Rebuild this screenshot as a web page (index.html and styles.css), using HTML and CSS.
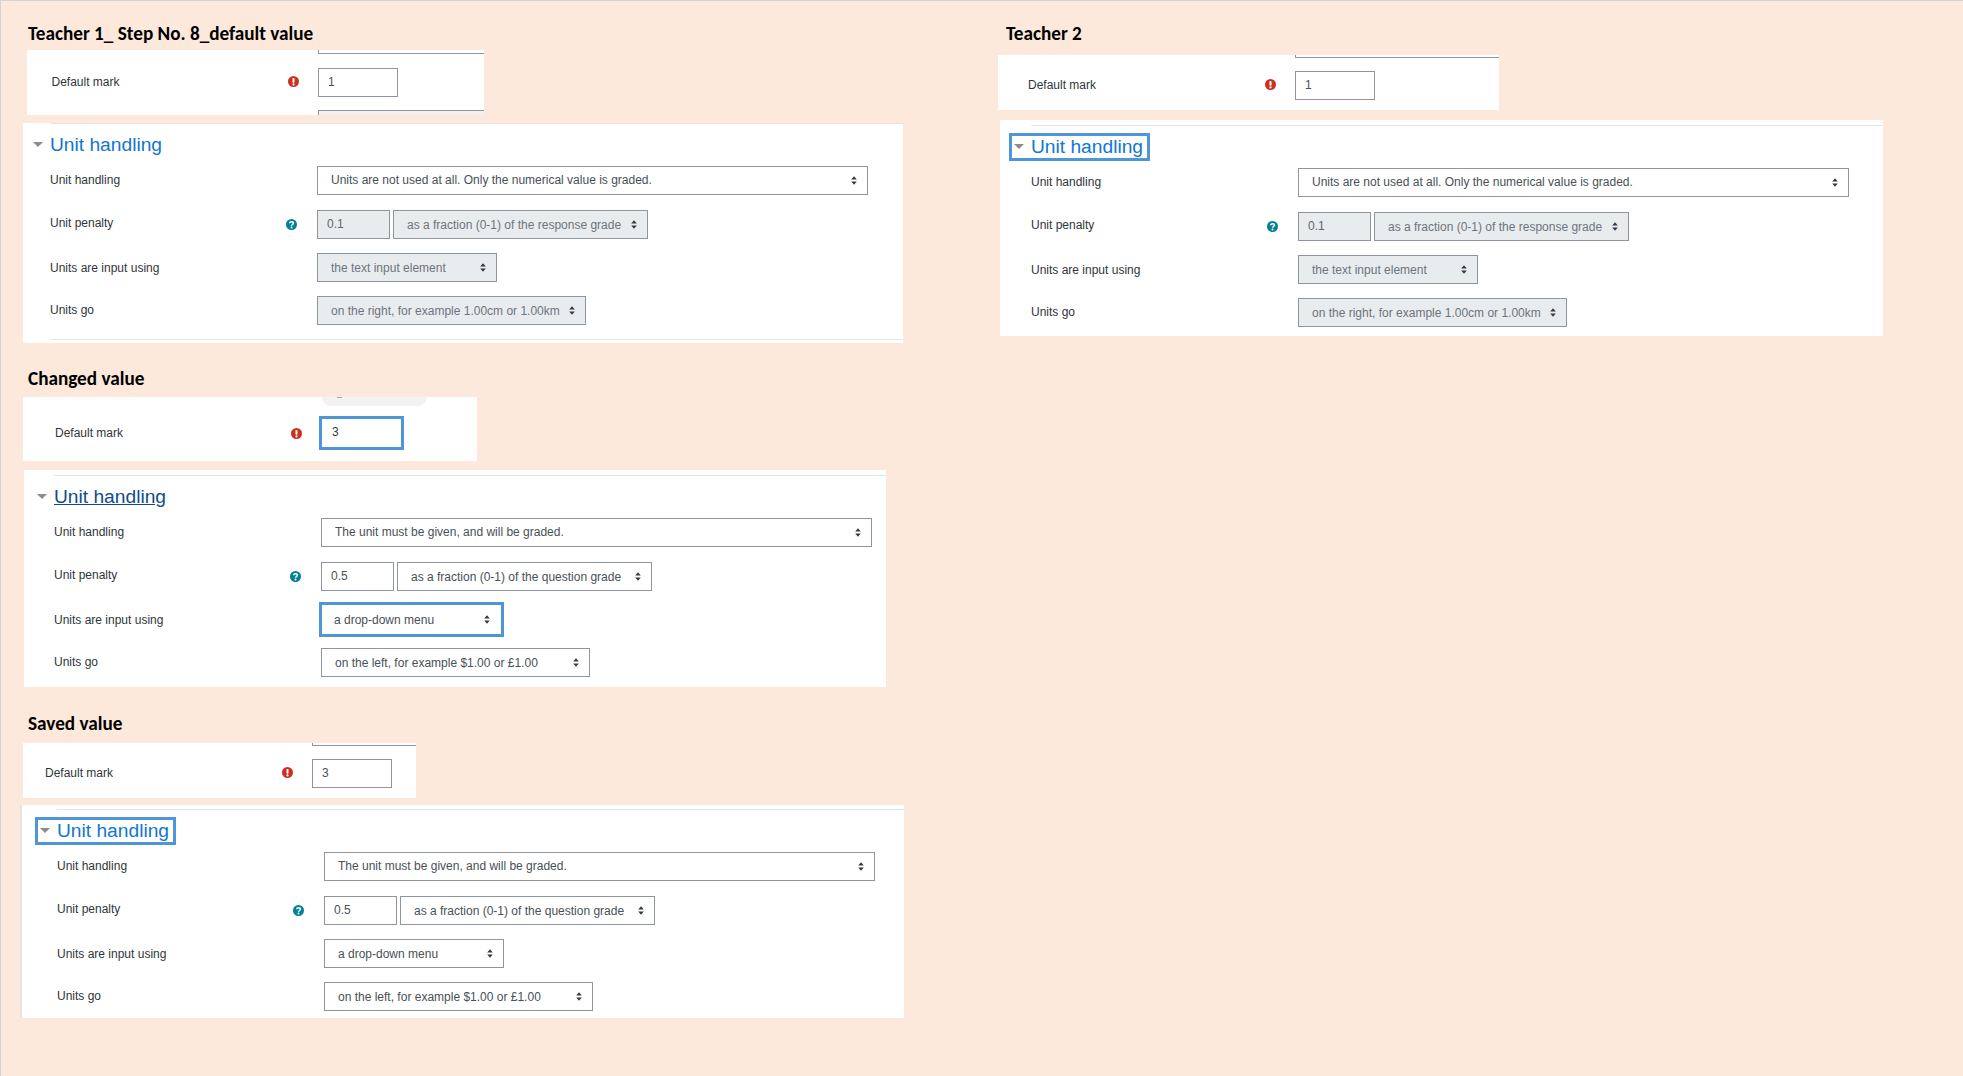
FILE: index.html
```html
<!DOCTYPE html>
<html lang="en">
<head>
<meta charset="utf-8">
<title>Unit handling comparison</title>
<link rel="stylesheet" href="styles.css">
</head>
<body>
<svg class="defs" aria-hidden="true">
  <symbol id="i-req" viewBox="0 0 11 11"><circle cx="5.5" cy="5.5" r="5.5" fill="#ca3120"/><rect x="4.5" y="2.1" width="2" height="4.7" rx=".7" fill="#fff"/><circle cx="5.5" cy="8.4" r="1.05" fill="#fff"/></symbol>
  <symbol id="i-help" viewBox="0 0 11 11"><circle cx="5.5" cy="5.5" r="5.5" fill="#008196"/><path d="M3.6 4.3c.1-1 .9-1.6 1.9-1.6s1.9.6 1.9 1.5c0 1.4-1.9 1.3-1.9 2.6" fill="none" stroke="#fff" stroke-width="1.5"/><circle cx="5.5" cy="8.6" r="1" fill="#fff"/></symbol>
  <symbol id="i-sort" viewBox="0 0 6 9"><path d="M3 .3 5.8 3.5H.2zM3 8.7.2 5.5h5.6z" fill="#343a40"/></symbol>
</svg>
<main class="canvas">

  <section class="shot shot-a">
    <h2 class="title">Teacher 1_ Step No. 8_default value</h2>
    <div class="card">
      <div class="frag frag-top"></div>
      <div class="card-row">
        <div class="label">Default mark<svg class="icon"><use href="#i-req"/></svg></div>
        <div class="input">1</div>
      </div>
      <div class="frag frag-bottom"></div>
    </div>
    <div class="unit">
      <div class="rule"></div>
      <div class="legend"><a class="legend-link"><span class="caret"></span><span class="legend-text">Unit handling</span></a></div>
      <div class="row row-first"><div class="label">Unit handling</div><div class="select w-full"><span>Units are not used at all. Only the numerical value is graded.</span><svg class="sort"><use href="#i-sort"/></svg></div></div>
      <div class="row"><div class="label label-up">Unit penalty<svg class="icon"><use href="#i-help"/></svg></div><div class="input input-penalty off">0.1</div><div class="select w-frac off"><span>as a fraction (0-1) of the response grade</span><svg class="sort"><use href="#i-sort"/></svg></div></div>
      <div class="row"><div class="label">Units are input using</div><div class="select w-using off"><span>the text input element</span><svg class="sort"><use href="#i-sort"/></svg></div></div>
      <div class="row row-last"><div class="label">Units go</div><div class="select w-go off"><span>on the right, for example 1.00cm or 1.00km</span><svg class="sort"><use href="#i-sort"/></svg></div></div>
      <div class="rule rule-end"></div>
    </div>
  </section>

  <section class="shot shot-b">
    <h2 class="title">Changed value</h2>
    <div class="card">
      <div class="frag frag-pill"></div>
      <div class="card-row">
        <div class="label">Default mark<svg class="icon"><use href="#i-req"/></svg></div>
        <div class="input input-focus">3</div>
      </div>
    </div>
    <div class="unit">
      <div class="rule"></div>
      <div class="legend"><a class="legend-link"><span class="caret"></span><span class="legend-text legend-hover">Unit handling</span></a></div>
      <div class="row row-first"><div class="label">Unit handling</div><div class="select w-full"><span>The unit must be given, and will be graded.</span><svg class="sort"><use href="#i-sort"/></svg></div></div>
      <div class="row"><div class="label label-up">Unit penalty<svg class="icon"><use href="#i-help"/></svg></div><div class="input input-penalty">0.5</div><div class="select w-frac"><span>as a fraction (0-1) of the question grade</span><svg class="sort"><use href="#i-sort"/></svg></div></div>
      <div class="row"><div class="label">Units are input using</div><div class="select w-using select-focus"><span>a drop-down menu</span><svg class="sort"><use href="#i-sort"/></svg></div></div>
      <div class="row row-last"><div class="label">Units go</div><div class="select w-go"><span>on the left, for example $1.00 or £1.00</span><svg class="sort"><use href="#i-sort"/></svg></div></div>
    </div>
  </section>

  <section class="shot shot-c">
    <h2 class="title">Saved value</h2>
    <div class="card">
      <div class="frag frag-top"></div>
      <div class="card-row">
        <div class="label">Default mark<svg class="icon"><use href="#i-req"/></svg></div>
        <div class="input">3</div>
      </div>
    </div>
    <div class="unit">
      <div class="rule"></div>
      <div class="legend"><a class="legend-link legend-focus"><span class="caret"></span><span class="legend-text">Unit handling</span></a></div>
      <div class="row row-first"><div class="label">Unit handling</div><div class="select w-full"><span>The unit must be given, and will be graded.</span><svg class="sort"><use href="#i-sort"/></svg></div></div>
      <div class="row"><div class="label label-up">Unit penalty<svg class="icon"><use href="#i-help"/></svg></div><div class="input input-penalty">0.5</div><div class="select w-frac"><span>as a fraction (0-1) of the question grade</span><svg class="sort"><use href="#i-sort"/></svg></div></div>
      <div class="row"><div class="label">Units are input using</div><div class="select w-using"><span>a drop-down menu</span><svg class="sort"><use href="#i-sort"/></svg></div></div>
      <div class="row row-last"><div class="label">Units go</div><div class="select w-go"><span>on the left, for example $1.00 or £1.00</span><svg class="sort"><use href="#i-sort"/></svg></div></div>
    </div>
  </section>

  <section class="shot shot-d">
    <h2 class="title">Teacher 2</h2>
    <div class="card">
      <div class="frag frag-top"></div>
      <div class="card-row">
        <div class="label">Default mark<svg class="icon"><use href="#i-req"/></svg></div>
        <div class="input">1</div>
      </div>
    </div>
    <div class="unit">
      <div class="rule"></div>
      <div class="legend"><a class="legend-link legend-focus"><span class="caret"></span><span class="legend-text">Unit handling</span></a></div>
      <div class="row row-first"><div class="label">Unit handling</div><div class="select w-full"><span>Units are not used at all. Only the numerical value is graded.</span><svg class="sort"><use href="#i-sort"/></svg></div></div>
      <div class="row"><div class="label label-up">Unit penalty<svg class="icon"><use href="#i-help"/></svg></div><div class="input input-penalty off">0.1</div><div class="select w-frac off"><span>as a fraction (0-1) of the response grade</span><svg class="sort"><use href="#i-sort"/></svg></div></div>
      <div class="row"><div class="label">Units are input using</div><div class="select w-using off"><span>the text input element</span><svg class="sort"><use href="#i-sort"/></svg></div></div>
      <div class="row row-last"><div class="label">Units go</div><div class="select w-go off"><span>on the right, for example 1.00cm or 1.00km</span><svg class="sort"><use href="#i-sort"/></svg></div></div>
    </div>
  </section>

</main>
</body>
</html>
```
FILE: styles.css
```css
* { box-sizing: border-box; }

html, body { margin: 0; padding: 0; }

body {
  background: #fce9db;
  font-family: "Liberation Sans", Arial, sans-serif;
  font-size: 12px;
  color: #343a40;
}

.defs { position: absolute; width: 0; height: 0; }

.canvas {
  position: relative;
  width: 1963px;
  height: 1076px;
  overflow: hidden;
  border-top: 1px solid #d3d3d3;
  border-left: 1px solid #d3d3d3;
}

/* Each pasted screenshot sits at its own place on the collage */
.shot {
  position: absolute;
  display: flex;
  flex-direction: column;
  align-items: flex-start;
}
.shot-a { left: 22px; top: 20px; }
.shot-b { left: 22px; top: 365px; }
.shot-c { left: 19px; top: 710px; }
.shot-d { left: 997px; top: 20px; }

.title {
  margin: 0;
  height: 26px;
  font-family: Carlito, Lato, "Open Sans", sans-serif;
  font-size: 19.2px;
  font-weight: 700;
  line-height: 26px;
  color: #000;
  white-space: nowrap;
}
.shot-a .title, .shot-b .title { margin-left: 5px; }
.shot-c .title { margin-left: 8px; }
.shot-d .title { margin-left: 8px; }

/* Default mark card */
.card { background: #fff; overflow: hidden; }
.shot-a .card { margin: 3px 0 8px 4px; width: 457px; height: 65px; }
.shot-b .card { margin: 5px 0 9px 0; width: 454px; height: 64px; }
.shot-c .card { margin: 6px 0 7px 3px; width: 393px; height: 55px; }
.shot-d .card { margin: 8px 0 10px 0; width: 501px; height: 55px; }

.frag { border: 0 solid #8f959e; }
.frag-top { height: 4px; border-width: 0 0 1px 1px; }
.frag-bottom { height: 5px; margin: 13px 0 0 291px; border-width: 1px 0 0 1px; background: #f0f0f0; }
.frag-pill {
  position: relative;
  width: 105px;
  height: 9px;
  margin-left: 299px;
  background: #f2f2f2;
  border-radius: 0 0 10px 10px;
}
.frag-pill::before {
  content: "";
  position: absolute;
  left: 15px;
  top: 0;
  width: 5px;
  height: 1px;
  background: #a8a8a8;
}

.shot-a .frag-top { margin-left: 291px; }
.shot-c .frag-top { margin-left: 289px; height: 3px; }
.shot-d .frag-top { margin-left: 297px; height: 3px; }

.card-row { display: flex; align-items: center; }
.shot-a .card-row { padding-left: 24.5px; margin-top: 14px; --col: 266.5px; --gap: 19.5px; }
.shot-b .card-row { padding-left: 32px; margin-top: 10px; --col: 264px; --gap: 17px; }
.shot-c .card-row { padding-left: 22px; margin-top: 13px; --col: 267px; --gap: 19.5px; }
.shot-d .card-row { padding-left: 30px; margin-top: 13px; --col: 267px; --gap: 19.5px; }

.label {
  flex: none;
  display: flex;
  align-items: center;
  width: var(--col);
  color: #2f353a;
  white-space: nowrap;
}
.card-row .label { padding-bottom: 2px; }
.shot-b .card-row .label { padding-bottom: 0; }
.label-up { padding-bottom: 3px; }
.row-first .label, .row-last .label { padding-bottom: 2px; }
.row-first .select span { padding-bottom: 1px; }

.icon {
  flex: none;
  width: 11px;
  height: 11px;
  margin-left: auto;
  margin-right: var(--gap);
}
.label-up .icon { position: relative; top: 1px; }

.input,
.select {
  flex: none;
  display: flex;
  align-items: center;
  height: 29px;
  background: #fff;
  border: 1px solid #8f959e;
  color: #495057;
  white-space: nowrap;
}

.input { width: 80px; padding: 0 0 2px 9px; }
.input-penalty { width: 73px; margin-right: 3px; }
.input-focus {
  width: 85px;
  height: 34px;
  padding-left: 10px;
  border: 3px solid #4f96d9;
  color: #343a40;
}

.select { justify-content: space-between; padding: 0 10px 0 13px; }
.w-full { width: 551px; }
.w-frac { width: 255px; }
.w-using { width: 180px; }
.w-go { width: 269px; }

.select-focus {
  width: 185px;
  height: 35px;
  margin: -3px -3px -3px -2px;
  padding: 0 11px 0 12px;
  border: 3px solid #4f96d9;
}

.off { background: #e9ecef; color: #6c757d; }
.input.off { color: #5f666c; }

.sort { flex: none; width: 6px; height: 9px; }

/* Unit handling fieldset */
.unit { background: #fff; overflow: hidden; --col: 267px; --gap: 20.5px; }
.shot-a .unit { width: 880px; height: 220px; padding-left: 27px; }
.shot-b .unit { width: 862px; height: 217px; margin-left: 1px; padding: 5px 0 0 30px; }
.shot-c .unit { width: 884px; height: 213px; padding: 4px 0 0 35px; border-left: 2px solid #e3e3e3; }
.shot-d .unit { width: 883px; height: 216px; margin-left: 2px; padding: 5px 0 0 31px; }

.rule { height: 1px; background: #e4e4e4; }

.legend { height: 42px; padding-top: 7px; }

.legend-link {
  display: inline-flex;
  align-items: center;
  width: 141px;
  height: 28px;
  margin-left: -22px;
  padding-left: 2px;
  border: 3px solid transparent;
}
.legend-focus { border-color: #4f96d9; }

.caret {
  flex: none;
  width: 0;
  height: 0;
  margin-right: 7px;
  margin-bottom: 2px;
  border-style: solid;
  border-width: 5px 5px 0 5px;
  border-color: #8c8c8c transparent transparent transparent;
}

.legend-text {
  font-size: 19.2px;
  line-height: 24px;
  color: #1177d1;
  white-space: nowrap;
}
.legend-hover { color: #0f4d8a; text-decoration: underline; }

.row { display: flex; align-items: center; margin-bottom: 14px; }
.row-first { margin-bottom: 15px; }
```
